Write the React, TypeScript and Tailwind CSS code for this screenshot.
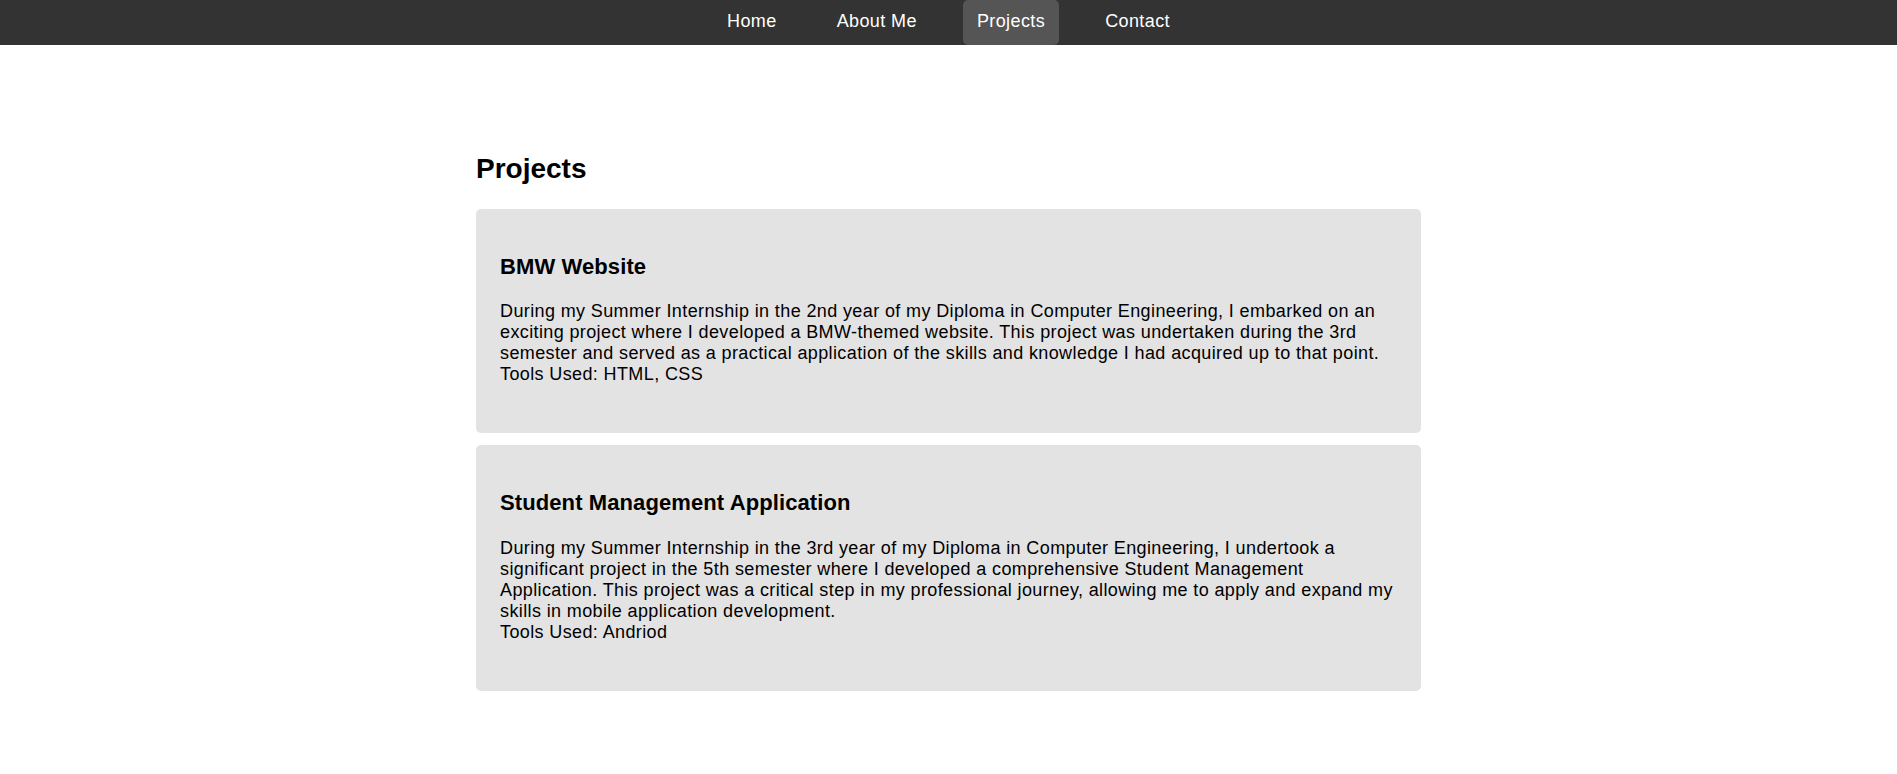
const links = ["Home", "About Me", "Projects", "Contact"];

const projects = [
	{
		title: "BMW Website",
		body: "During my Summer Internship in the 2nd year of my Diploma in Computer Engineering, I embarked on an exciting project where I developed a BMW-themed website. This project was undertaken during the 3rd semester and served as a practical application of the skills and knowledge I had acquired up to that point.",
		tools: "HTML, CSS",
	},
	{
		title: "Student Management Application",
		body: "During my Summer Internship in the 3rd year of my Diploma in Computer Engineering, I undertook a significant project in the 5th semester where I developed a comprehensive Student Management Application. This project was a critical step in my professional journey, allowing me to apply and expand my skills in mobile application development.",
		tools: "Andriod",
	},
];

export default function App() {
	return (
		<div className="min-h-screen bg-white text-black" style={{ fontFamily: '"Liberation Sans", Arial, sans-serif' }}>
			<nav className="h-[45px] bg-[#333333] flex justify-center gap-[32px]">
				{links.map((l) => (
					<a
						key={l}
						href="#"
						className={`block px-[14px] pt-[11px] pb-[13px] text-[18px] leading-[21px] tracking-[0.4px] text-white rounded-[5px] ${l === "Projects" ? "bg-[#555555]" : ""}`}
					>
						{l}
					</a>
				))}
			</nav>

			<main className="w-[945px] mx-auto pt-[108px] pb-[40px]">
				<h2 className="text-[28px] leading-[1.15] font-bold mb-[24px]">Projects</h2>
				{projects.map((p) => (
					<div key={p.title} className="bg-[#e3e3e3] rounded-[5px] px-[24px] pt-[24px] pb-[30px] mb-[12px]">
						<h3 className="text-[22px] leading-[1.15] font-bold tracking-[0.1px] mt-[21px] mb-[22px]">{p.title}</h3>
						<p className="text-[18px] leading-[21px] tracking-[0.38px] mb-[18px]">
							{p.body}
							<br />
							Tools Used: {p.tools}
						</p>
					</div>
				))}
			</main>
		</div>
	);
}
